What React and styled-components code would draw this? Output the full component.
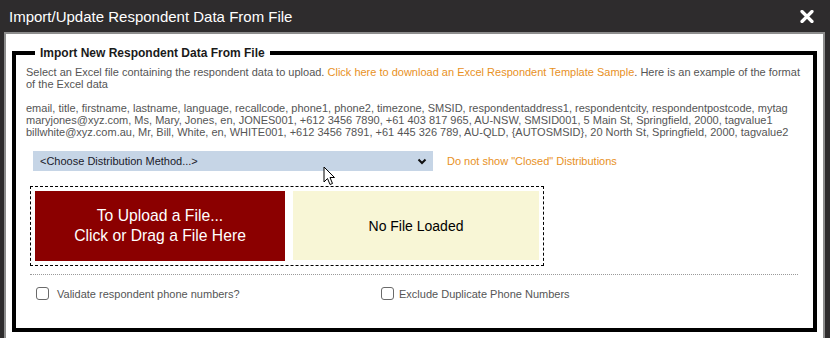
import React from "react";
import styled, { createGlobalStyle } from "styled-components";

const GlobalStyle = createGlobalStyle`
  html, body {
    margin: 0;
    padding: 0;
    background: #2e2c2d;
    font-family: "Liberation Sans", Arial, sans-serif;
  }
`;

const Dialog = styled.div`
  position: relative;
  width: 830px;
  height: 338px;
  overflow: hidden;
  background: #2e2c2d;
  display: flex;
  flex-direction: column;
`;

const TitleBar = styled.div`
  height: 32px;
  flex: 0 0 32px;
  display: flex;
  align-items: center;
  justify-content: space-between;
  padding: 0 16px 0 9px;
  box-sizing: border-box;
`;

const Title = styled.div`
  color: #ffffff;
  font-size: 15px;
`;

const CloseButton = styled.button`
  background: none;
  border: none;
  padding: 0;
  width: 14px;
  height: 13px;
  display: flex;
  cursor: pointer;
`;

const Body = styled.div`
  flex: 1;
  margin: 0 5px 0 4px;
  border: 2px solid #8d8d8d;
  border-bottom: none;
  background: #ffffff;
  padding: 12px 6px 0 6px;
`;

const Fieldset = styled.fieldset`
  margin: 0;
  border: 4px solid #000000;
  padding: 6px 10px 28px 10px;
  min-inline-size: 0;
`;

const Legend = styled.legend`
  margin-left: 9px;
  padding: 0 5px;
  font-size: 12px;
  line-height: 14px;
  font-weight: bold;
  color: #1a1a1a;
`;

const Text = styled.p`
  margin: ${(p) => (p.$gap ? "12px 0 0" : "0")};
  font-size: 11px;
  line-height: 12px;
  color: #555555;
`;

const Link = styled.a`
  color: #e8911e;
  cursor: pointer;
`;

const SelectRow = styled.div`
  display: flex;
  align-items: center;
  margin: 13px 0 0 7px;
  gap: 14px;
`;

const SelectWrap = styled.div`
  position: relative;
  width: 400px;
  height: 20px;
`;

const Select = styled.select`
  appearance: none;
  width: 100%;
  height: 20px;
  border: none;
  border-radius: 0;
  background: #c6d5e6;
  color: #1a1a2a;
  font-family: "Liberation Sans", Arial, sans-serif;
  font-size: 11px;
  padding: 0 0 0 7px;
  outline: none;
`;

const Chevron = styled.svg`
  position: absolute;
  right: 6px;
  top: 7px;
  pointer-events: none;
`;

const OrangeNote = styled.span`
  font-size: 11px;
  color: #e8911e;
`;

const DropZone = styled.div`
  margin: 15px 0 0 4px;
  width: 514px;
  height: 80px;
  box-sizing: border-box;
  border: 1px dashed #000000;
  padding: 4px;
  display: flex;
  gap: 8px;
`;

const UploadButton = styled.div`
  width: 250px;
  height: 70px;
  background: #8b0000;
  color: #ffffff;
  font-size: 15.7px;
  line-height: 20px;
  display: flex;
  align-items: center;
  justify-content: center;
  text-align: center;
  cursor: pointer;
`;

const FileStatus = styled.div`
  flex: 1;
  height: 69px;
  background: #f8f6d6;
  color: #000000;
  font-size: 14px;
  display: flex;
  align-items: center;
  justify-content: center;
`;

const Divider = styled.hr`
  margin: 8px 5px 0 4px;
  border: none;
  border-top: 1px dotted #9a9a9a;
  height: 0;
`;

const OptionsRow = styled.div`
  display: flex;
  margin: 12px 0 0 10px;
`;

const Option = styled.label`
  display: flex;
  align-items: center;
  gap: ${(p) => p.$gap}px;
  width: ${(p) => (p.$width ? `${p.$width}px` : "auto")};
  font-size: 11px;
  color: #555555;
  height: 13px;
`;

const Box = styled.span`
  width: 13px;
  height: 13px;
  box-sizing: border-box;
  border: 1.5px solid #6a6a6a;
  border-radius: 3px;
  background: #ffffff;
  flex: 0 0 13px;
`;

const Cursor = styled.svg`
  position: absolute;
  left: 323px;
  top: 166px;
`;

export default function App() {
  return (
    <>
      <GlobalStyle />
      <Dialog>
        <TitleBar>
          <Title>Import/Update Respondent Data From File</Title>
          <CloseButton aria-label="Close">
            <svg width="14" height="13" viewBox="0 0 14 13">
              <path d="M2 1.5 L12 11.5 M12 1.5 L2 11.5" stroke="#ffffff" strokeWidth="3.2" strokeLinecap="round" />
            </svg>
          </CloseButton>
        </TitleBar>
        <Body>
          <Fieldset>
            <Legend>Import New Respondent Data From File</Legend>
            <Text>
              Select an Excel file containing the respondent data to upload.{" "}
              <Link>Click here to download an Excel Respondent Template Sample</Link>. Here is an example of the format
              of the Excel data
            </Text>
            <Text $gap>
              email, title, firstname, lastname, language, recallcode, phone1, phone2, timezone, SMSID, respondentaddress1, respondentcity, respondentpostcode, mytag
              <br />
              maryjones@xyz.com, Ms, Mary, Jones, en, JONES001, +612 3456 7890, +61 403 817 965, AU-NSW, SMSID001, 5 Main St, Springfield, 2000, tagvalue1
              <br />
              billwhite@xyz.com.au, Mr, Bill, White, en, WHITE001, +612 3456 7891, +61 445 326 789, AU-QLD, {"{AUTOSMSID}"}, 20 North St, Springfield, 2000, tagvalue2
            </Text>
            <SelectRow>
              <SelectWrap>
                <Select defaultValue="">
                  <option value="">&lt;Choose Distribution Method...&gt;</option>
                </Select>
                <Chevron width="10" height="7" viewBox="0 0 10 7">
                  <path d="M1.5 1.5 L5 5 L8.5 1.5" fill="none" stroke="#111" strokeWidth="2" />
                </Chevron>
              </SelectWrap>
              <OrangeNote>Do not show "Closed" Distributions</OrangeNote>
            </SelectRow>
            <DropZone>
              <UploadButton>
                To Upload a File...
                <br />
                Click or Drag a File Here
              </UploadButton>
              <FileStatus>No File Loaded</FileStatus>
            </DropZone>
            <Divider />
            <OptionsRow>
              <Option $width={345} $gap={8}>
                <Box />
                Validate respondent phone numbers?
              </Option>
              <Option $gap={5}>
                <Box />
                Exclude Duplicate Phone Numbers
              </Option>
            </OptionsRow>
          </Fieldset>
        </Body>
        <Cursor width="13" height="20" viewBox="0 0 13 20">
          <path d="M1 1 L1 16 L4.5 12.5 L7 18.5 L9.5 17.5 L7 11.5 L11.5 11.5 Z" fill="#ffffff" stroke="#000000" strokeWidth="1" strokeLinejoin="round" />
        </Cursor>
      </Dialog>
    </>
  );
}
